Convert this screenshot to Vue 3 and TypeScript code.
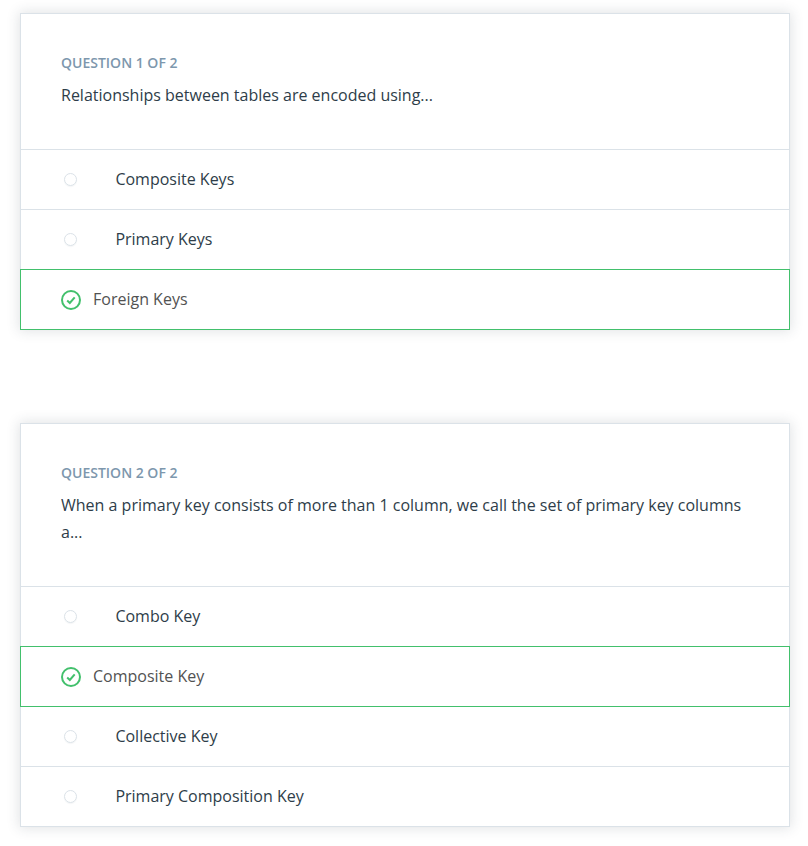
<script setup lang="ts">
interface Answer {
  text: string
  correct?: boolean
}

interface Question {
  prompt: string
  answers: Answer[]
}

const questions: Question[] = [
  {
    prompt: 'Relationships between tables are encoded using...',
    answers: [
      { text: 'Composite Keys' },
      { text: 'Primary Keys' },
      { text: 'Foreign Keys', correct: true },
    ],
  },
  {
    prompt:
      'When a primary key consists of more than 1 column, we call the set of primary key columns a...',
    answers: [
      { text: 'Combo Key' },
      { text: 'Composite Key', correct: true },
      { text: 'Collective Key' },
      { text: 'Primary Composition Key' },
    ],
  },
]
</script>

<template>
  <main class="quiz">
    <section v-for="(question, index) in questions" :key="index" class="card">
      <header class="head">
        <h2 class="label">Question {{ index + 1 }} of {{ questions.length }}</h2>
        <p class="prompt">{{ question.prompt }}</p>
      </header>
      <ul class="answers">
        <li
          v-for="answer in question.answers"
          :key="answer.text"
          class="answer"
          :class="{ correct: answer.correct }"
        >
          <svg v-if="answer.correct" class="check" viewBox="0 0 20 20" aria-hidden="true">
            <circle cx="10" cy="10" r="9" />
            <path d="M6.2 10.6 8.8 13 13.7 7.4" />
          </svg>
          <span v-else class="radio"></span>
          <span class="text">{{ answer.text }}</span>
        </li>
      </ul>
    </section>
  </main>
</template>

<style>
body {
  background: #fff;
}
</style>

<style scoped>
.quiz {
  display: flex;
  flex-direction: column;
  gap: 93px;
  padding: 13px 18px 19px 20px;
  font-family: 'Open Sans', 'Noto Sans', sans-serif;
  font-size: 16px;
  color: #2e3d49;
}

.card {
  border: 1px solid #dbe2e8;
  background: #fff;
  box-shadow: 0 0 12px 1px rgba(46, 61, 73, 0.15);
}

.head {
  padding: 40px;
}

.label {
  margin: 0 0 10px;
  font-size: 14px;
  font-weight: 600;
  line-height: 18px;
  text-transform: uppercase;
  color: #7d97ad;
}

.prompt {
  margin: 0;
  line-height: 27px;
}

.answers {
  margin: 0;
  padding: 0;
  list-style: none;
}

.answer {
  display: flex;
  align-items: center;
  box-sizing: border-box;
  height: 60px;
  padding: 0 40px 0 43px;
  border-top: 1px solid #dbe2e8;
}

.radio {
  box-sizing: border-box;
  width: 13px;
  height: 13px;
  margin: 0 38.4px 0 0;
  border: 1px solid #dbe2e8;
  border-radius: 50%;
  box-shadow: 0 1px 1px rgba(46, 61, 73, 0.05);
}

.text {
  margin-bottom: 2px;
  line-height: 24px;
}

/* The highlighted frame covers the card edge and the next divider. */
.correct {
  position: relative;
  height: 61px;
  margin: 0 -1px -1px;
  padding: 0 40px;
  border: 1px solid #42c06c;
  color: #525252;
}

.check {
  width: 20px;
  height: 20px;
  margin: 1px 12px 0 0;
  fill: none;
  stroke: #42c06c;
  stroke-width: 2;
}
</style>
